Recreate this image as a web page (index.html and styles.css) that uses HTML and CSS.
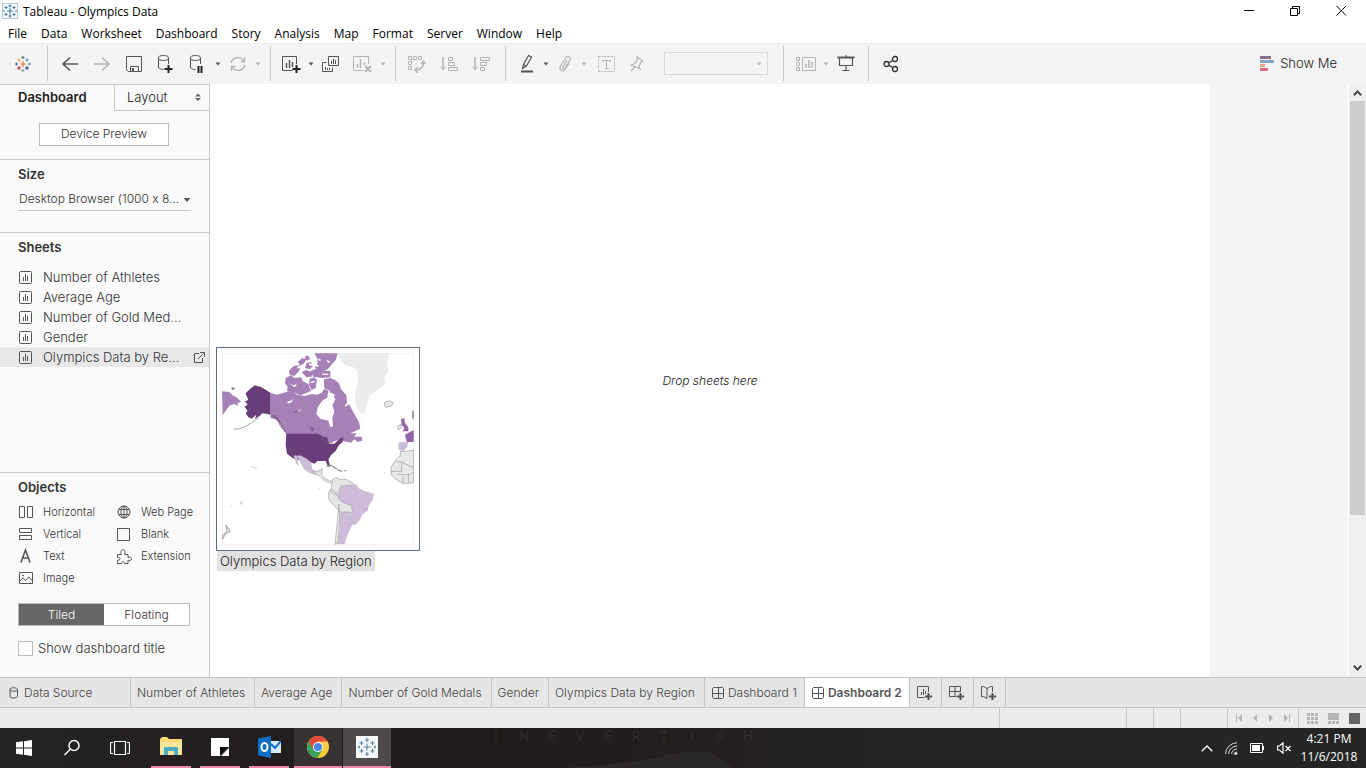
FILE: index.html
```html
<!DOCTYPE html>
<html lang="en">
<head>
<meta charset="utf-8">
<title>Tableau - Olympics Data</title>
<link rel="stylesheet" href="styles.css">
</head>
<body>
<svg class="sprite" aria-hidden="true">
  <symbol id="sheet" viewBox="0 0 13 13"><rect x=".5" y=".5" width="12" height="12" rx="1" fill="none" stroke="currentColor"/><path d="M4.5 6v4M6.500 3v7M8.500 5v5" fill="none" stroke="currentColor"/></symbol>
  <symbol id="grid" viewBox="0 0 12 12"><path d="M1.500 .5h9l1 1v9l-1 1h-9l-1-1v-9zM6.500 .5v11M.5 6.500h11" fill="none" stroke="currentColor"/></symbol>
  <symbol id="caret" viewBox="0 0 6 4"><path d="M.5 .5h5L3 3.500z" fill="currentColor"/></symbol>
  <symbol id="pluses" viewBox="0 0 18 18"><path d="M9 5.500v7M5.500 9h7"/><path d="M9 0v4M7 2h4M9 14v4M7 16h4M3.500 3v4M1.500 5h4M14.500 3v4M12.500 5h4M3.500 11v4M1.500 13h4M14.500 11v4M12.500 13h4M1 7.500v3M0 9h2M17 7.500v3M16 9h2"/></symbol>
</svg>
<div class="app">
  <header class="titlebar">
    <svg class="appicon" viewBox="0 0 16 16"><rect x=".5" y=".5" width="15" height="15" fill="#f5fafc" stroke="#bcc8d0"/><path d="M8 5v6M5 8h6M8 1.500v3M6.500 3h3M8 11.500v3M6.500 13h3M4 3v3M2.500 4.500h3M12 3v3M10.500 4.500h3M4 10v3M2.500 11.500h3M12 10v3M10.500 11.500h3M2 7v2M14 7v2" stroke="#3f7896" fill="none"/></svg>
    <span class="apptitle">Tableau - Olympics Data</span>
    <div class="winbtns">
      <button aria-label="Minimize"><svg width="11" height="11"><path d="M0 4.500h10" stroke="#000"/></svg></button>
      <button aria-label="Restore"><svg width="11" height="11"><path d="M.5 2.500h7v7h-7zM2.500 2.500v-2h7v7h-2" stroke="#000" fill="none"/></svg></button>
      <button aria-label="Close"><svg width="11" height="11"><path d="M.5 0l9.500 9.500M10 0L.5 9.500" stroke="#000"/></svg></button>
    </div>
  </header>
  <nav class="menubar">
    <button>File</button><button>Data</button><button>Worksheet</button><button>Dashboard</button><button>Story</button><button>Analysis</button><button>Map</button><button>Format</button><button>Server</button><button>Window</button><button>Help</button>
  </nav>
  <div class="toolbar">
    <div class="group home">
      <button class="tool" aria-label="Start page"><svg width="16" height="16" viewBox="0 0 16 16" fill="none"><path d="M8 5v6M5 8h6" stroke="#e8762c" stroke-width="1.200"/><path d="M8 0v3M6.500 1.500h3M1.500 6.500v3M0 8h3" stroke="#5b6591"/><path d="M8 13v3M6.500 14.500h3M14.500 6.500v3M13 8h3" stroke="#7199a6"/><path d="M4 2.500v3M2.500 4h3" stroke="#eb912c"/><path d="M12 2.500v3M10.500 4h3" stroke="#59879b"/><path d="M4 10v4M2 12h4" stroke="#c72035"/><path d="M12 10v4M10 12h4" stroke="#1f447e"/></svg></button>
    </div>
    <div class="group file">
      <button class="tool" aria-label="Undo"><svg width="18" height="16" fill="none" stroke="#555" stroke-width="1.600"><path d="M17 8H2M9 1.500L2 8l7 6.500"/></svg></button>
      <button class="tool off" aria-label="Redo"><svg width="18" height="16" fill="none" stroke="#b4b4b4" stroke-width="1.600"><path d="M1 8h15M9 1.500L16 8l-7 6.500"/></svg></button>
      <button class="tool" aria-label="Save"><svg width="16" height="16" fill="none" stroke="#555"><path d="M.5 .5h15v15H2.500l-2-2zM4.500 15.500v-5h8v5"/><path d="M6 12h2v3H6z" fill="#555" stroke="none"/></svg></button>
      <button class="tool" aria-label="New data source"><svg width="18" height="20" fill="none" stroke="#555"><ellipse cx="6.500" cy="4" rx="5" ry="2.500"/><path d="M1.500 4v9c0 1.500 2 2.500 5 2.500M11.500 4v6"/><path d="M11.500 11v8M7.500 15h8" stroke="#222" stroke-width="2"/></svg></button>
      <button class="tool" aria-label="Pause updates"><svg width="18" height="20" fill="none" stroke="#555"><ellipse cx="6.500" cy="4" rx="5" ry="2.500"/><path d="M1.500 4v9c0 1.500 2 2.500 5 2.500M11.500 4v6"/><path d="M9.500 12v7M12.500 12v7" stroke="#222" stroke-width="2"/></svg></button>
      <button class="drop" aria-label="Update options"><svg width="6" height="4"><use href="#caret"/></svg></button>
      <button class="tool off" aria-label="Run update"><svg width="18" height="16" fill="none" stroke="#b4b4b4" stroke-width="1.300"><path d="M2 7a7 6.500 0 0 1 13-2M16 9a7 6.500 0 0 1-13 2M15.500 1v4.500h-4M2.500 15v-4.500h4"/></svg></button>
      <button class="drop off" aria-label="Run options"><svg width="6" height="4"><use href="#caret"/></svg></button>
    </div>
    <div class="group sheets">
      <button class="tool" aria-label="New worksheet"><svg width="20" height="18" fill="none" stroke="#555"><path d="M15.500 9V1.500H1.500v14h10"/><path d="M5.500 8v5M8.500 5v8M11.500 7v5" stroke-width="1.500"/><path d="M15.500 10v8M11.500 14h8" stroke="#222" stroke-width="2"/></svg></button>
      <button class="drop" aria-label="New worksheet options"><svg width="6" height="4"><use href="#caret"/></svg></button>
      <button class="tool" aria-label="Duplicate"><svg width="18" height="16" fill="none" stroke="#555"><path d="M6.500 .5h10v9h-10zM9.500 5v3M11.500 3v5M13.500 4v4M4.500 6.500h-4v9h10v-4M3.500 11v3M5.500 12v2M7.500 12v2"/></svg></button>
      <button class="tool off" aria-label="Clear sheet"><svg width="20" height="18" fill="none" stroke="#b4b4b4"><path d="M15.500 9V1.500H.5v14h10"/><path d="M4.500 9v4M7.500 4v9M11.500 7v3" stroke-width="1.500"/><path d="M12 11l6 6M18 11l-6 6" stroke-width="2"/></svg></button>
      <button class="drop off" aria-label="Clear options"><svg width="6" height="4"><use href="#caret"/></svg></button>
    </div>
    <div class="group sort">
      <button class="tool off" aria-label="Swap rows and columns"><svg width="18" height="18" fill="none" stroke="#b4b4b4"><path d="M.5 1.500h3v3h-3zM5.500 1.500h3v3h-3zM10.500 1.500h3v3h-3zM.5 6.500h3v3h-3zM.5 11.500h3v3h-3z"/><path d="M15.500 7c0 5-3 8-8 8M13 9l2.500-3L18 9M10 12l-3 3 3 3" stroke-width="1.400"/></svg></button>
      <button class="tool off" aria-label="Sort ascending"><svg width="18" height="16" fill="none" stroke="#b4b4b4"><path d="M3 1v12" stroke-width="1.500"/><path d="M.5 10.500L3 14l2.500-3.500M8.500 1.500h4v3h-4zM8.500 6.500h6v3h-6zM8.500 11.500h9v3h-9z"/></svg></button>
      <button class="tool off" aria-label="Sort descending"><svg width="18" height="16" fill="none" stroke="#b4b4b4"><path d="M3 1v12" stroke-width="1.500"/><path d="M.5 10.500L3 14l2.500-3.500M8.500 1.500h9v3h-9zM8.500 6.500h6v3h-6zM8.500 11.500h4v3h-4z"/></svg></button>
    </div>
    <div class="group marks">
      <button class="tool" aria-label="Highlight"><svg width="14" height="19" fill="none" stroke="#555"><path d="M8.500 1.500l3 1.500-5 9-3-1.500zM3.500 10.500l-1 4 4-2.500" stroke-width="1.200"/><path d="M1 17.500h12" stroke-width="2"/></svg></button>
      <button class="drop" aria-label="Highlight options"><svg width="6" height="4"><use href="#caret"/></svg></button>
      <button class="tool off" aria-label="Group members"><svg width="14" height="18" fill="none" stroke="#b4b4b4" stroke-width="1.200"><path d="M9 5l-4 7c-.8 2 1.200 2.500 2 1l5-8c1.500-3-2.500-5-4.200-2L2.500 11c-2 4 2.500 6.500 4.500 3.500l4-6"/></svg></button>
      <button class="drop off" aria-label="Group options"><svg width="6" height="4"><use href="#caret"/></svg></button>
      <button class="tool off label" aria-label="Show mark labels"><svg width="18" height="16" fill="none" stroke="#b4b4b4"><path d="M.5 .5h16v15H.5z" stroke-dasharray="2 1"/><path d="M4.500 6V4.500h8V6M8.500 4.500v8M6.500 12.500h4"/></svg></button>
      <button class="tool off" aria-label="Fix axes"><svg width="14" height="16" fill="none" stroke="#b4b4b4" stroke-width="1.200"><path d="M7 1l6 4-2 1-2 4 1 3-3-2-5-1-1-1 3-1 3-3zM5 11l-4 4"/></svg></button>
      <select class="fit" aria-label="Fit" disabled><option></option></select>
      <svg class="fitcaret" width="6" height="4"><use href="#caret"/></svg>
    </div>
    <div class="group view">
      <button class="tool off" aria-label="Show cards"><svg width="20" height="16" fill="none" stroke="#b4b4b4"><path d="M.5 1.500h3v3h-3zM.5 6.500h3v3h-3zM.5 11.500h3v3h-3zM6.500 1.500h13v13h-13z"/><path d="M10 8v4M13 4v8M16 6v6" stroke-width="1.500"/></svg></button>
      <button class="drop off" aria-label="Card options"><svg width="6" height="4"><use href="#caret"/></svg></button>
      <button class="tool" aria-label="Presentation mode"><svg width="18" height="17" fill="none" stroke="#555"><path d="M.5 2.500h17" stroke-width="2"/><path d="M2.500 3v7.500h13V3M9 0v2M9 10.500v5M5.500 15.500h7" stroke-width="1.200"/></svg></button>
    </div>
    <div class="group share">
      <button class="tool" aria-label="Share"><svg width="16" height="18" fill="none" stroke="#333" stroke-width="1.300"><circle cx="3.500" cy="9" r="2.500"/><circle cx="12" cy="4" r="2.500"/><circle cx="12" cy="14" r="2.500"/><path d="M5.500 8l4-2.500M5.500 10l4 2.500"/></svg></button>
    </div>
    <button class="showme"><svg width="14" height="15"><path d="M0 0h11v3H0z" fill="#85738f"/><path d="M0 4h14v3H0z" fill="#85a5c4"/><path d="M0 8h5v3H0z" fill="#edaa91"/><path d="M0 12h8v3H0z" fill="#d96a80"/></svg>Show Me</button>
  </div>
  <main class="work">
    <aside class="side">
      <div class="sidetabs"><button class="on">Dashboard</button><button class="lay">Layout<svg width="6" height="8"><path d="M0 3.500L3 .5l3 3zM0 5l3 3 3-3z" fill="#666"/></svg></button></div>
      <section class="preview"><button class="outline">Device Preview</button></section>
      <section class="size">
        <h2><label for="size">Size</label></h2>
        <div class="sizebox"><select id="size"><option>Desktop Browser (1000 x 8...</option></select><svg width="8" height="6" viewBox="0 0 6 4"><use href="#caret"/></svg></div>
      </section>
      <section class="list">
        <h2>Sheets</h2>
        <ul>
          <li><svg width="13" height="13"><use href="#sheet"/></svg><span>Number of Athletes</span></li>
          <li><svg width="13" height="13"><use href="#sheet"/></svg><span>Average Age</span></li>
          <li><svg width="13" height="13"><use href="#sheet"/></svg><span>Number of Gold Med...</span></li>
          <li><svg width="13" height="13"><use href="#sheet"/></svg><span>Gender</span></li>
          <li class="sel"><svg width="13" height="13"><use href="#sheet"/></svg><span>Olympics Data by Re...</span><a href="#open" aria-label="Go to sheet"><svg width="11" height="11" fill="none" stroke="#555"><path d="M5 1.500H.5v9h8V6M4 7l5.500-5.500M6 .5h4.500V5"/></svg></a></li>
        </ul>
      </section>
      <section class="objects">
        <h2>Objects</h2>
        <div class="objgrid">
          <button><svg width="14" height="14"><path d="M.5 1.500h5v11h-5zM8.500 1.500h5v11h-5z"/></svg>Horizontal</button>
          <button><svg width="14" height="14"><circle cx="7" cy="7" r="6"/><ellipse cx="7" cy="7" rx="3" ry="6"/><path d="M7 1v12M2 4.500h10M2 9.500h10"/></svg>Web Page</button>
          <button><svg width="14" height="14"><path d="M.5 1.500h12v4H.5zM.5 8.500h12v4H.5z"/></svg>Vertical</button>
          <button><svg width="14" height="14"><path d="M.5 1.500h12v12H.5z"/></svg>Blank</button>
          <button><svg width="14" height="14"><path d="M2 13.500L6.500 1l4.500 12.500M3.500 9h6" stroke-width="1.600"/></svg>Text</button>
          <button><svg width="15" height="15"><path d="M.5 5.500h4c-1-2-1-4.500 1.500-5 2 .5 2.500 3 1.500 5H11v3c1.500-1 3.500-.5 3.500 1.300s-2 2.200-3.500 1.200v3.500H7.500c0-2.500-3-2.500-3 0H.5v-3.500c3.500.5 3.500-3 0-2.500z"/></svg>Extension</button>
          <button><svg width="14" height="14"><path d="M.5 1.500h13v11H.5zM1 10l3-3 2.500 2.500L9.500 6l4 3.500"/><circle cx="4" cy="4.500" r=".6"/></svg>Image</button>
        </div>
        <div class="seg"><button class="on">Tiled</button><button>Floating</button></div>
        <label class="check"><input type="checkbox">Show dashboard title</label>
      </section>
    </aside>
    <div class="stage">
      <div class="canvas"><p>Drop sheets here</p></div>
      <div class="scroll" aria-hidden="true">
        <svg width="9" height="6"><path d="M.8 5.200L4.500 1.500l3.700 3.700" fill="none" stroke="#444" stroke-width="2"/></svg>
        <i></i>
        <svg width="9" height="6"><path d="M.8 .8l3.700 3.700L8.200 .8" fill="none" stroke="#444" stroke-width="2"/></svg>
      </div>
    </div>
    <figure class="thumb">
      <svg viewBox="37 39 576 576" width="192" height="192">
        <rect x="38" y="40" width="574" height="574" fill="#fff" stroke="#eee" stroke-width="2"/>
        <path fill="#ececec" d="M386 40h152l-6 30 4 28-12 10 4 22-24 20-22 14-8 18-8 34-8 6-12-10-8-22-2-26 6-22 4-24-4-26-12-12-24-4-14-16z"/>
        <g fill="#a681b8">
          <path d="M37 154l22 2 10 10 12 6 14 14-10 2-2 10-8-6-14 4-10 12-12 18z"/>
          <path d="M182 158l20 6 20-6 22-6 18 12 24 4 20-6 16 2 14-6 8-12 12 6-2 20-16 10-14 20-4 20 12 14 24 6 6 20 8-4-2-24 6-20-6-18 10-20 18 4 12 20 10-8 16 30 14 24 4 20-30 14 18 0-6 10 22 0 2 12-14 4-10-8-10 10-22-4-10-6-22 8-28 12-14-8-22-8-16-10H234l-10-20-14-24-14-10-14-4z"/>
          <path d="M228 114l16-8 10 8 20-2 6 12 16 8 8 20-12 6-20 8-18-8-22-4 2-14-8-10z"/>
          <path d="M238 92l14-14 22-4-6 20-14 14-14-4zM276 96l14-6 18 6-2 14-16 2zM264 66l14-12 12 4-8 14-10 4zM290 70l14-4 6 12-10 10-14-4zM284 52l10-6 8 10-10 6zM300 116l14-4 8 8-4 24-12 6-8-16z"/>
          <path d="M314 40h70l-6 20-14 16-10 12-16 6-22-10 8-16-2-14zM304 92l16-6 20 6h22v20l-26 2-26-4z"/>
          <path d="M342 118l20-4 14 6 12 10 6 18 16 18 2 24-12 12-12-6-10-20-14-8-4-16-14-6-10-14z"/>
        </g>
        <g fill="#fff"><path d="M262 80l10-4 4 4-12 6zM298 70l30 6-2 4-28-4zM302 126l12-4 2 4-12 4zM338 100l18 2v3l-18-1zM334 122l8-6 2 30-8 8zM354 162l12-4 10 6-6 10-16 2zM240 132l14 4 8-6-6 12zM350 60l12 4-6 6zM322 54l14 6-8 2zM234 184l10-2 8-6-6 10-12 5zM264 212l12-6-10 10z"/></g>
        <path fill="#7c6290" d="M252 216l14-5 0 4-12 4zM300 262l8-2 6 10-6 6z"/>
        <path fill="#693c7a" d="M182 158v66l-8-2-16-2-8 8-14 8 4-12-14 12-10-4-8-12 6-8-10-12 10-6-8-10 10-4-4-10-4-10 14-14 14-10 20 6zM230 281h96l16 10 10 0 6 20 16 0 20-18 8 0-4 14-10 8-10 18-14 12-8 14 6 20-6 2-8-18-24 0-10 8-10-4-14 0-18-6-22-6-18-14-4-26z"/>
        <path fill="none" stroke="#777" stroke-width="2" d="M72 268l18-2 20-8 16-10 20-14M326 282l12 6 2 14M348 304l20 4"/>
        <path fill="none" stroke="#6d5a78" stroke-width="5" stroke-dasharray="6 2" d="M190 226l14 10 8 18 14 20"/>
        <g fill="#cfbcdb" stroke="#aaa" stroke-width="1"><path d="M252 347l22 0 18 10 12 10 2 20 16 8 10-6-4 14-10 2-20-8-14-10-8-14-10-16-4-6 4 26-6-8z"/><path d="M390 442l20-8 30 0 8 12 16 8 28 8-4 18-12 18-2 14-16 10-8 18-10 10-6 6-14-14 4-20-14-12-12-14-18-8-4-20 12-8z"/><path d="M394 514l24 4 6 14 8 14-10 18-8 18-6 14-4 16h-22l8-38 0-36zM567 308l28-2-4 16-10 10-14-4z"/></g>
        <g fill="#e5e5e5" stroke="#a5a5a5" stroke-width="2"><path d="M368 418l14-6 6 6 22 0 22 12-6 6-32 2-8 20-14 6-8-10zM362 448l14 8 12 20 12 12 24 8 6 22-14-2-26 0-14-16-18-20-2-18zM388 492l2 40-4 70-10 12 6-60z"/><path d="M308 396l16 0 14-10-2 18 12 14 20 6-4 6-20-8-14-14z"/></g>
        <path fill="none" stroke="#999" stroke-width="4" d="M350 378l16-2 10 8 6 4M384 390l14 4M404 392h6"/>
        <g fill="#e8e8e8" stroke="#999" stroke-width="2"><path d="M523 188l14-6 14 6-6 10-18 4zM564 260l10-8 2 10-10 8z"/><path d="M572 334l16 0 24-4v98l-18 2-14 0-24-14-12-12 0-22 16-24 12-12zM560 366l16 0 0 28-32 0M576 366l36 18M580 406l0 22M562 402l36 2 14-6M596 400v28"/></g>
        <path fill="#9265a8" d="M574 238l10-4 2 16 10 12 0 12-18 0 6-10-8-10zM586 284l26-14v36l-20 0-4-12z"/>
        <path fill="#777" d="M64 145l8-3 4 4-8 4zM608 212h4v24h-4z"/>
        <path fill="#ddd" stroke="#888" stroke-width="2" d="M48 554l8 10 6 10-14 8-10 16 0-12 14-12z"/>
        <path fill="none" stroke="#bbb" stroke-width="2" d="M124 380l10 2 8 6M92 486l6 0v6h-6zM60 500l6-4M324 446l6 2M510 324h4M430 548l8-10M522 398l4 2"/>
      </svg>
      <figcaption>Olympics Data by Region</figcaption>
    </figure>
  </main>
  <nav class="tabs">
    <button class="src"><svg width="10" height="12" fill="none" stroke="#555"><path d="M1 2.500v7c0 1 1.500 1.500 3.500 1.500S8.500 10.500 8.500 9.500v-7C8.500 .2 1 .2 1 2.500c0 2.300 7.500 2.300 7.500 0"/></svg>Data Source</button>
    <button>Number of Athletes</button><button>Average Age</button><button>Number of Gold Medals</button><button>Gender</button><button>Olympics Data by Region</button>
    <button class="dash"><svg width="12" height="12"><use href="#grid"/></svg>Dashboard 1</button>
    <button class="dash on"><svg width="12" height="12"><use href="#grid"/></svg>Dashboard 2</button>
    <button class="add" aria-label="New worksheet"><svg width="16" height="16" fill="none" stroke="#555"><path d="M11.500 7V1.500H.5v11h7M4.500 7v3M6.500 4v6M8.500 6v3"/><path d="M11.500 8v7M8 11.500h7" stroke-width="2"/></svg></button>
    <button class="add" aria-label="New dashboard"><svg width="16" height="16" fill="none" stroke="#555"><path d="M11.500 7V1.500H.5v10h7M6 1.500v10M.5 6.500h11"/><path d="M11.500 8v7M8 11.500h7" stroke-width="2"/></svg></button>
    <button class="add" aria-label="New story"><svg width="16" height="16" fill="none" stroke="#555"><path d="M.5 1.500h2L6 3.500l3.500-2h2V7M.5 1.500v10h2L6 13.500v-10"/><path d="M11.500 8v7M8 11.500h7" stroke-width="2"/></svg></button>
  </nav>
  <footer class="status">
    <span class="c1"></span><span class="c2"></span><span class="c2"></span><span class="c3"></span>
    <div class="pager">
      <button aria-label="First"><svg width="8" height="8"><path d="M1.500 0v8" fill="none"/><path d="M7 0L3 4l4 4z" stroke="none"/></svg></button>
      <button aria-label="Previous"><svg width="8" height="8"><path d="M6 0L2 4l4 4z" stroke="none"/></svg></button>
      <button aria-label="Next"><svg width="8" height="8"><path d="M2 0l4 4-4 4z" stroke="none"/></svg></button>
      <button aria-label="Last"><svg width="8" height="8"><path d="M6.500 0v8" fill="none"/><path d="M1 0l4 4-4 4z" stroke="none"/></svg></button>
    </div>
    <div class="modes">
      <button aria-label="Sheet sorter"><svg width="11" height="11" fill="#b5b5b5"><path d="M0 0h3v3H0zM4 0h3v3H4zM8 0h3v3H8zM0 4h3v3H0zM4 4h3v3H4zM8 4h3v3H8zM0 8h3v3H0zM4 8h3v3H4zM8 8h3v3H8z"/></svg></button>
      <button aria-label="Filmstrip"><svg width="11" height="11" fill="#b5b5b5"><path d="M0 0h11v7H0zM0 8h3v3H0zM4 8h3v3H4zM8 8h3v3H8z"/></svg></button>
      <button aria-label="Tabs"><svg width="11" height="11" fill="#666"><path d="M0 0h11v11H0z"/></svg></button>
    </div>
  </footer>
  <footer class="taskbar">
    <button aria-label="Start"><svg width="16" height="16" fill="#fff"><path d="M0 2.300L7 1.300v6.200H0zM8 1.200L16 0v7.500H8zM0 8.500h7v6.200l-7-1zM8 8.500h8V16l-8-1.200z"/></svg></button>
    <button aria-label="Search"><svg width="18" height="18" fill="none" stroke="#fff" stroke-width="1.500"><circle cx="11" cy="6.500" r="5"/><path d="M7.500 10L1.500 16"/></svg></button>
    <button aria-label="Task view"><svg width="20" height="16" fill="none" stroke="#fff" stroke-width="1.200"><path d="M4.500 1.500h11v13h-11zM3 2.500H.5v11H3M17 2.500h2.500v11H17"/></svg></button>
    <button class="run" aria-label="File Explorer"><svg width="22" height="20"><path d="M0 2l2-2h5l2 2h13v16H0z" fill="#f9d877"/><path d="M0 5h22v13H0z" fill="#fce59b"/><path d="M4 10h14v8h-4v-4H8v4H4z" fill="#4bacc6"/></svg></button>
    <button class="run" aria-label="Sticky Notes"><svg width="18" height="18"><path d="M0 0h18v9l-9 9H0z" fill="#fff"/><path d="M9 9h9l-9 9z" fill="#111"/><path d="M18 10v8h-8z" fill="#fff"/></svg></button>
    <button class="run" aria-label="Outlook"><svg width="23" height="22"><path d="M12 5h11v12H12z" fill="#d8ebfa"/><path d="M13 8l4 4 6-7" stroke="#0e70c4" stroke-width="2" fill="none"/><path d="M0 2.500L13 0v22L0 19.500z" fill="#0e70c4"/><ellipse cx="6.500" cy="11" rx="3" ry="4" fill="none" stroke="#fff" stroke-width="2"/></svg></button>
    <button class="run open" aria-label="Chrome"><svg width="22" height="22"><circle cx="11" cy="11" r="11" fill="#fbcf3b"/><path d="M1.500 5.500A11 11 0 0 1 20.500 5.500H11L6.500 14z" fill="#df4a3c"/><path d="M1.500 5.500A11 11 0 0 0 10.500 22L15.500 13.500 6.500 13.500z" fill="#3da35d"/><circle cx="11" cy="11" r="5" fill="#fff"/><circle cx="11" cy="11" r="4" fill="#4a86e8"/></svg></button>
    <button class="run open now" aria-label="Tableau"><svg width="22" height="22"><path d="M0 0h22v22H0z" fill="#f4f8fa"/><svg x="2" y="2" width="18" height="18" fill="none" stroke="#58829b"><use href="#pluses"/></svg></svg></button>
    <div class="wall" aria-hidden="true">
      <div class="letters"><span>I</span><span>N</span><span>E</span><span>V</span><span>E</span><span>R</span><span>T</span><span>I</span><span>S</span><span>H</span></div>
      <svg class="hand" viewBox="0 0 200 20" preserveAspectRatio="none"><path d="M0 20Q60 16 105 4T150 1L170 20z" fill="#2b2829"/></svg>
    </div>
    <div class="tray">
      <svg width="12" height="7"><path d="M.7 6.300L6 1l5.300 5.300" fill="none" stroke="#fff" stroke-width="1.400"/></svg>
      <svg width="13" height="13" fill="none" stroke="#ddd"><path d="M.5 12A11.500 11.500 0 0 1 12 .8M3.500 12A8.500 8.500 0 0 1 12 4M6.500 12A6 6 0 0 1 12 7M9 12.500A3 3 0 0 1 12 10"/><circle cx="11" cy="11.500" r="1" fill="#fff"/></svg>
      <svg width="15" height="10" fill="none" stroke="#fff"><path d="M.5 .5h12v9H.5zM13.500 3v4"/><path d="M2 2h8v6H2z" fill="#fff" stroke="none"/></svg>
      <svg width="15" height="12" fill="none" stroke="#fff" stroke-width="1.200"><path d="M.5 4h2L6 .8v10.400L2.500 8h-2zM8.500 4l5 5M13.500 4l-5 5"/></svg>
    </div>
    <div class="clock"><span>4:21 PM</span><span>11/6/2018</span></div>
  </footer>
</div>
</body>
</html>
```
FILE: styles.css
```css
* { box-sizing: border-box; }
body { margin: 0; font-family: Inter, "Open Sans", sans-serif; font-size: 13px; font-weight: 300; font-variant-ligatures: no-contextual; color: #333; }
button { border: 0; background: none; padding: 0; margin: 0; font: inherit; color: inherit; }
h2 { margin: 0; font-size: 13px; line-height: 16px; font-weight: 600; color: #333; }
svg { display: block; flex: none; }
.sprite { position: absolute; width: 0; height: 0; }
.app { display: flex; flex-direction: column; height: 100vh; min-height: 700px; background: #fff; }

.titlebar { display: flex; align-items: center; height: 22px; padding-left: 2px; gap: 5px; font: 12px "Open Sans", sans-serif; color: #000; }
.appicon { width: 16px; height: 16px; }
.winbtns { display: flex; margin-left: auto; padding-right: 2px; }
.winbtns button { width: 46px; height: 20px; display: flex; align-items: center; justify-content: center; }

.menubar { display: flex; gap: 14px; height: 21px; padding: 2px 0 0 8px; font: 12px "Open Sans", sans-serif; color: #000; }

.toolbar { display: flex; height: 41px; background: #f4f4f4; border-top: 1px solid #ececec; color: #555; }
.group { display: flex; align-items: center; border-right: 1px solid #c8c8c8; margin: 2px 0 3px; }
.tool { display: flex; justify-content: center; align-items: center; width: 32px; height: 32px; }
.drop { display: flex; justify-content: center; width: 8px; }
.off { color: #b4b4b4; }
.home { padding: 0 8px 0 7px; }
.file { padding: 0 8px 0 6px; }
.sheets { padding: 0 8px 0 4px; }
.sort { padding: 0 8px 0 5px; }
.marks { padding: 0 15px 0 6px; position: relative; }
.marks .tool { width: 30px; }
.marks .label { margin-left: 4px; }
.fit { width: 104px; height: 23px; margin-left: 12px; appearance: none; border: 1px solid #ccc; background: #f4f4f4; }
.fitcaret { position: absolute; right: 21px; color: #bbb; }
.view { padding: 0 6px; }
.share { padding: 0 6px; border: 0; }
.showme { display: flex; align-items: center; gap: 6px; margin: 0 29px 2px auto; font-size: 13px; color: #222; }

.work { flex: 1; display: flex; min-height: 0; position: relative; }
.side { width: 210px; background: #fafafa; border-right: 1px solid #c8c8c8; display: flex; flex-direction: column; }
.side section { border-bottom: 1px solid #c8c8c8; }
.sidetabs { display: flex; height: 27px; border-top: 1px solid #c8c8c8; }
.sidetabs button { width: 114px; padding: 0 0 2px 18px; text-align: left; color: #222; }
.sidetabs .on { font-weight: 600; }
.sidetabs .lay { flex: 1; display: flex; align-items: center; justify-content: space-between; padding: 0 8px 1px 12px; border-left: 1px solid #c8c8c8; border-bottom: 1px solid #c8c8c8; }
.preview { padding: 12px 0 13px 39px; }
.outline { display: block; width: 130px; height: 23px; padding-bottom: 2px; border: 1px solid #bbb; background: #fff; font-size: 12px; }
.size { padding: 6px 18px 21px; }
.sizebox { position: relative; display: flex; align-items: center; margin-top: 7px; height: 22px; border-bottom: 1px solid #c8c8c8; }
.sizebox select { appearance: none; width: 100%; border: 0; padding: 0 0 2px 1px; background: none; font: inherit; font-size: 12px; color: #333; }
.sizebox svg { position: absolute; right: 0; color: #555; }
.list { flex: 1; padding-top: 6px; }
.list h2, .objects h2 { padding-left: 18px; }
.list ul { list-style: none; margin: 12px 0 0; padding: 0; }
.list li { display: flex; align-items: center; height: 20px; padding: 0 4px 0 19px; gap: 11px; }
.list li svg { color: #555; }
.list li a { margin-left: auto; }
.list .sel { background: #e8e8e8; }
.side .objects { padding: 6px 0 21px; border: 0; }
.objgrid { display: grid; grid-template-columns: 98px 1fr; grid-auto-rows: 22px; margin: 6px 0 14px 19px; font-size: 11px; }
.objgrid button { display: flex; align-items: center; gap: 10px; }
.objgrid svg { fill: none; stroke: #555; overflow: visible; width: 14px; }
.seg { display: flex; width: 172px; height: 23px; margin-left: 18px; font-size: 12px; border: 1px solid #bbb; background: #fff; }
.seg button { flex: 1; }
.seg .on { background: #666; color: #fff; }
.check { display: flex; align-items: center; gap: 5px; margin: 14px 0 0 18px; line-height: 16px; }
.check input { appearance: none; width: 15px; height: 15px; margin: 0; border: 1px solid #bbb; background: #fff; }

.stage { flex: 1; display: flex; background: #f4f4f4; }
.canvas { flex: 0 1 1000px; background: #fff; display: flex; align-items: center; justify-content: center; }
.canvas p { margin: 0; font-size: 12px; font-style: italic; color: #222; }
.scroll { width: 18px; margin-left: auto; border-left: 1px solid #fff; background: #f0f0f0; display: flex; flex-direction: column; align-items: center; padding: 6px 0; }
.scroll i { width: 15px; flex: 0 1 414px; margin: 5px 0 auto; background: #cdcdcd; }
.thumb { position: absolute; left: 216px; top: 263px; margin: 0; }
.thumb svg { box-sizing: content-box; padding: 5px; border: 1px solid #607080; background: #fff; }
.thumb figcaption { display: inline-block; margin-left: 1px; padding: 0 3px; line-height: 20px; background: #e2e2e2; color: #222; }

.tabs { display: flex; height: 31px; background: #e6e6e6; border: solid #c4c4c4; border-width: 1px 0; font-size: 12px; color: #444; }
.tabs button { display: flex; align-items: center; padding: 0 9px 0 6px; border-right: 1px solid #c4c4c4; white-space: nowrap; }
.tabs .src { width: 131px; padding-left: 9px; gap: 5px; }
.tabs .dash { padding: 0 7px; gap: 4px; }
.tabs svg { color: #555; }
.tabs .on { background: #fff; font-weight: 600; color: #555; }
.tabs .add { width: 32px; padding: 0; justify-content: center; }
.status { display: flex; height: 20px; background: #ececeb; }
.status > span, .pager { border-right: 1px solid #c8c8c8; }
.c1 { width: 128px; margin-left: auto; border-left: 1px solid #c8c8c8; }
.c2 { width: 27px; }
.c3 { width: 47px; }
.pager { display: flex; width: 71px; padding: 0 3px; }
.pager button { flex: 1; display: flex; align-items: center; justify-content: center; }
.pager svg { fill: #b5b5b5; stroke: #b5b5b5; }
.modes { display: flex; align-items: center; gap: 10px; padding: 0 6px 0 8px; }

.taskbar { display: flex; height: 40px; background: linear-gradient(90deg, #252325, #211b1b 30%, #221d1d 45%, #252525 75%); color: #fff; font: 12px "Open Sans", sans-serif; }
.taskbar > button { width: 48px; display: flex; align-items: center; justify-content: center; }
.taskbar .run { width: 40px; margin: 0 2px 0 7px; border-bottom: 2px solid #ee86ae; }
.taskbar .open { width: 48px; margin: 0 1px 0 0; background: #383333; }
.taskbar .run + .open { margin-left: 3px; }
.taskbar .open + .now { margin-left: 0; background: #4f4a4a; }
.wall { flex: 1; display: flex; flex-direction: column; justify-content: space-between; }
.letters { display: flex; padding-left: 90px; font-size: 14px; line-height: 16px; color: #302c2d; }
.letters span { width: 28px; text-align: center; }
.hand { width: 200px; height: 16px; margin-left: 170px; }
.tray { display: flex; align-items: center; gap: 12px; padding-right: 8px; }
.clock { display: flex; flex-direction: column; align-items: center; justify-content: center; line-height: 18px; width: 58px; margin-right: 8px; }
```
